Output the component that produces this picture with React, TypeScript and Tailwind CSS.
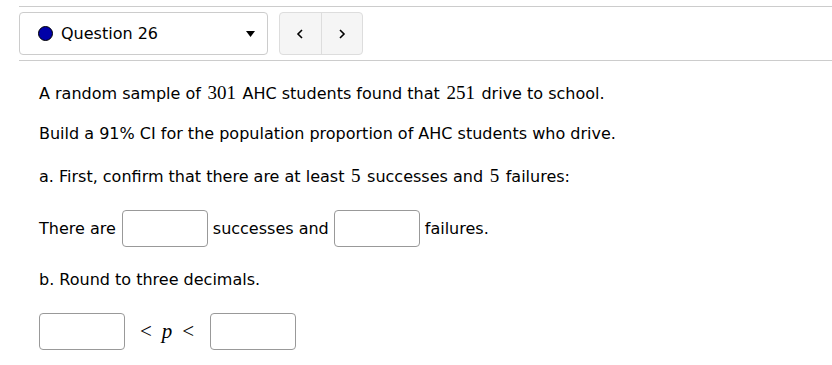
const M = ({ children }: { children: React.ReactNode }) => (
  <span className="mx-[1.5px] font-['Liberation_Serif',serif] text-[19px]">{children}</span>
)

const Box = () => (
  <input
    type="text"
    className="h-[37px] w-[86px] rounded-[4px] border border-[#999] bg-white"
  />
)

export default function App() {
  return (
    <div className="min-h-[365px] bg-white pt-[6px] pl-[19px] font-['DejaVu_Sans',sans-serif] text-[16px] text-black">
      <div className="flex gap-[11px] border-y border-[#ccc] pt-[5px] pb-[5px]">
        <div className="flex h-[43px] w-[249px] items-center rounded-[4px] border border-[#ccc] pl-[18px] pr-[12px]">
          <span className="h-[15px] w-[15px] rounded-full border border-black bg-[#0000a8]" />
          <span className="ml-[8px] mt-[1px] flex-1">Question 26</span>
          <svg width="9" height="6" viewBox="0 0 9 6">
            <path d="M0 0H9L4.5 6Z" fill="#000" />
          </svg>
        </div>
        <div className="flex h-[43px] w-[84px] rounded-[4px] border border-[#ddd] bg-[#f5f5f5]">
          <button className="flex flex-1 items-center justify-center border-r border-[#ddd]">
            <svg width="8" height="10" viewBox="0 0 8 10">
              <path d="M6 1L2 5L6 9" fill="none" stroke="#000" strokeWidth="1.6" />
            </svg>
          </button>
          <button className="flex flex-1 items-center justify-center">
            <svg width="8" height="10" viewBox="0 0 8 10">
              <path d="M2 1L6 5L2 9" fill="none" stroke="#000" strokeWidth="1.6" />
            </svg>
          </button>
        </div>
      </div>

      <div className="pl-[20px]">
        <p className="mt-[20px] leading-[24px]">
          A random sample of <M>301</M> AHC students found that <M>251</M> drive to school.
        </p>
        <p className="mt-[16px] leading-[24px]">Build a 91% CI for the population proportion of AHC students who drive.</p>
        <p className="mt-[18px] leading-[24px]">
          a. First, confirm that there are at least <M>5</M> successes and <M>5</M> failures:
        </p>
        <div className="mt-[21px] flex items-center gap-[5px]">
          <span className="mr-[1px]">There are</span>
          <Box />
          <span>successes and</span>
          <Box />
          <span>failures.</span>
        </div>
        <p className="mt-[21px] leading-[24px]">b. Round to three decimals.</p>
        <div className="mt-[21px] flex items-center">
          <Box />
          <span className="ml-[15px] mr-[16px] flex items-center gap-[10px] font-['Liberation_Serif',serif] text-[21px]">
            <span>&lt;</span>
            <i>p</i>
            <span>&lt;</span>
          </span>
          <Box />
        </div>
      </div>
    </div>
  )
}
